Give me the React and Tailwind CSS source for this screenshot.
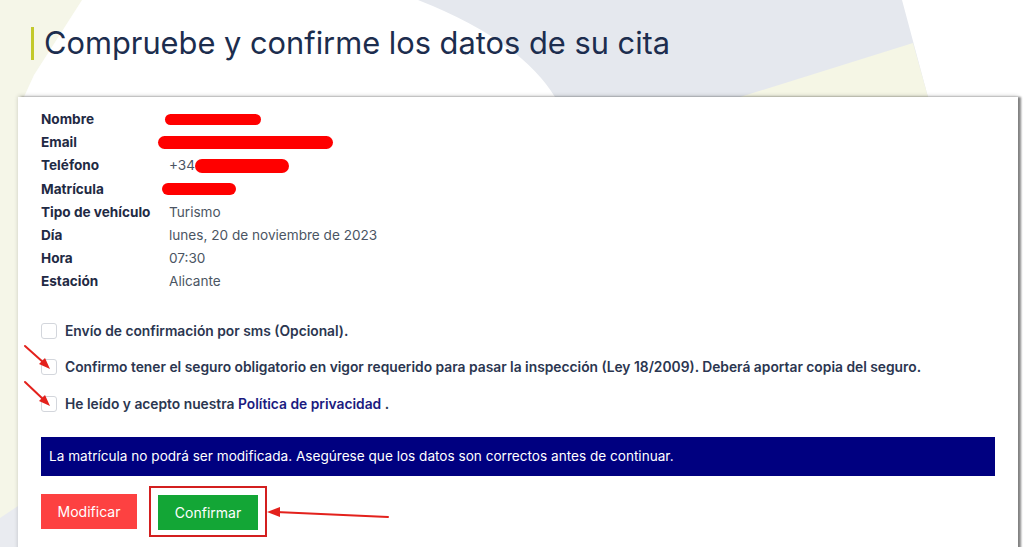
import React from 'react'

const rows = [
  { label: 'Nombre', mark: { w: 96, ml: -4, h: 11 } },
  { label: 'Email', mark: { w: 175, ml: -11, h: 13 } },
  { label: 'Teléfono', value: '+34', mark: { w: 94, ml: 0, h: 14 } },
  { label: 'Matrícula', mark: { w: 74, ml: -7, h: 12 } },
  { label: 'Tipo de vehículo', value: 'Turismo' },
  { label: 'Día', value: 'lunes, 20 de noviembre de 2023' },
  { label: 'Hora', value: '07:30' },
  { label: 'Estación', value: 'Alicante' },
]

function Background() {
  return (
    <svg className="absolute inset-0 w-full h-full" viewBox="0 0 1024 547" preserveAspectRatio="none">
      <rect width="1024" height="547" fill="#ffffff" />
      <polygon points="0,0 82,0 34,75 18,110 18,547 0,547" fill="#f5f6e8" />
      <polygon points="0,518 18,506 18,547 0,547" fill="#e9ebf0" />
      <path d="M418 0 Q 520 40 555 97 L 928 97 L 902 0 Z" fill="#e5e8ee" />
      <polygon points="740,97 913,43 928,97" fill="#f5f6e5" />
    </svg>
  )
}

function Arrows() {
  return (
    <svg className="absolute inset-0 w-full h-full pointer-events-none" viewBox="0 0 1024 547">
      <g stroke="#e3211c" strokeWidth="2" fill="#e3211c" strokeLinecap="round">
        <line x1="25" y1="346" x2="44" y2="363" />
        <polygon points="50,369 39,364 45,358" stroke="none" />
        <line x1="25" y1="382" x2="44" y2="400" />
        <polygon points="50,406 39,401 45,395" stroke="none" />
        <line x1="388" y1="517" x2="276" y2="512" />
        <polygon points="267,512 280,507 280,517" stroke="none" />
      </g>
    </svg>
  )
}

function Check({ children }) {
  return (
    <label className="flex items-center h-[36.5px]">
      <span className="w-[16px] h-[16px] border border-[#d3d6dc] rounded-[3px] bg-white mr-[8px] shrink-0"></span>
      <span className="text-[13.8px] font-semibold text-[#2b3650]">{children}</span>
    </label>
  )
}

export default function App() {
  return (
    <div className="relative w-[1024px] h-[547px] overflow-hidden" style={{ fontFamily: 'Inter, "Noto Sans", sans-serif' }}>
      <Background />
      <div className="relative">
        <div className="pt-[27px] pl-[31px]">
          <h1 className="border-l-[3px] border-[#c2c92c] pl-[10px] h-[33px] flex items-center text-[30.8px] text-[#1c2d4e] font-normal">
            Compruebe y confirme los datos de su cita
          </h1>
        </div>

        <div className="mt-[37px] ml-[18px] w-[1000px] h-[470px] bg-white shadow-[3px_0_2px_rgba(0,0,0,0.45),0_-1px_4px_rgba(0,0,0,0.18)] pt-[11px] px-[23px]">
          <div className="grid grid-cols-[128px_1fr] leading-[23.2px]">
            {rows.map((r) => (
              <React.Fragment key={r.label}>
                <div className="text-[13.6px] font-bold text-[#1f2a44]">{r.label}</div>
                <div className="text-[13.6px] text-[#4b5563] flex items-center">
                  {r.value}
                  {r.mark && (
                    <span
                      className="inline-block rounded-full bg-[#ff0000]"
                      style={{ width: r.mark.w, height: r.mark.h, marginLeft: r.mark.ml }}
                    ></span>
                  )}
                </div>
              </React.Fragment>
            ))}
          </div>

          <div className="mt-[19px]">
            <Check>Envío de confirmación por sms (Opcional).</Check>
            <Check>Confirmo tener el seguro obligatorio en vigor requerido para pasar la inspección (Ley 18/2009). Deberá aportar copia del seguro.</Check>
            <Check>
              He leído y acepto nuestra <a className="text-[#1b1b80]">Política de privacidad</a> .
            </Check>
          </div>

          <div className="mt-[15px] h-[39px] bg-[#000080] flex items-center px-[8px] text-[13.6px] text-white">
            La matrícula no podrá ser modificada. Asegúrese que los datos son correctos antes de continuar.
          </div>

          <div className="mt-[10px] flex items-center gap-[12px]">
            <button className="w-[96px] h-[35px] bg-[#fd4141] text-white text-[14px]">Modificar</button>
            <div className="border-2 border-[#d31f1f] pt-[7px] pb-[5px] px-[7px]">
              <button className="w-[100px] h-[35px] bg-[#13a636] text-white text-[14px]">Confirmar</button>
            </div>
          </div>
        </div>
      </div>
      <Arrows />
    </div>
  )
}
